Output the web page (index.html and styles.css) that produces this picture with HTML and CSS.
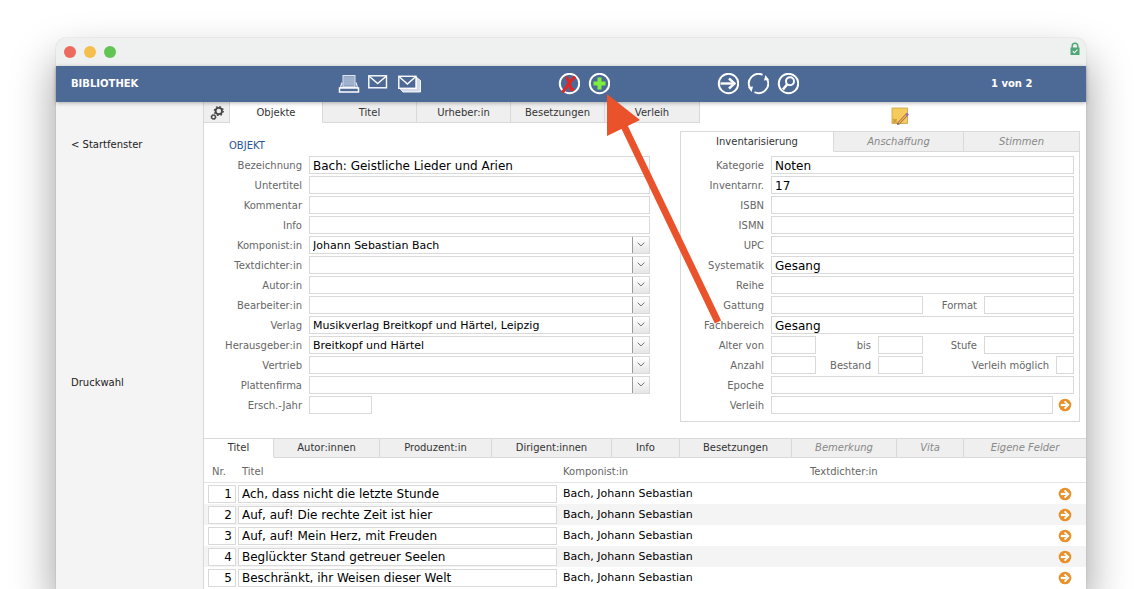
FILE: index.html
```html
<!DOCTYPE html>
<html lang="de">
<head>
<meta charset="utf-8">
<title>Bibliothek</title>
<link rel="stylesheet" href="styles.css">
</head>
<body>
<svg class="defs" aria-hidden="true">
  <symbol id="go" viewBox="0 0 14 14">
    <circle cx="7" cy="7" r="6.300" fill="#e8912a"/>
    <path d="M2.800 7h6.500" fill="none" stroke="#fff" stroke-width="2.200"/>
    <path d="M6.600 3.300L10.300 7l-3.700 3.700" fill="none" stroke="#fff" stroke-width="1.900"/>
  </symbol>
  <symbol id="chevron" viewBox="0 0 17 16">
    <path d="M5 5.500L8.500 9 12 5.500" fill="none" stroke="#666" stroke-width="1"/>
  </symbol>
</svg>
<div class="window">
  <header class="titlebar">
    <span class="dot red"></span><span class="dot yellow"></span><span class="dot green"></span>
    <svg class="lock" viewBox="0 0 10 14" width="10" height="14" role="img" aria-label="Gesichert">
      <path d="M2.200 6V4a2.800 2.800 0 0 1 5.600 0v2" fill="none" stroke="#4fa775" stroke-width="1.500"/>
      <rect x=".5" y="5.500" width="9" height="7.500" fill="#4fa775"/>
      <path d="M2.800 9.200l1.600 1.600 3-3.200" fill="none" stroke="#fff" stroke-width="1.100"/>
    </svg>
  </header>

  <div class="toolbar">
    <h1 class="app-title">BIBLIOTHEK</h1>
    <div class="tools">
      <button class="tool" aria-label="Drucken">
        <svg viewBox="0 0 22 22" width="22" height="22" fill="none" stroke="#fff">
          <rect x="5" y="2.500" width="12" height="11.500" fill="#8fa3c4" stroke="#dfe6f1"/>
          <path d="M6 5h10M6 7h10M6 9h10M6 11h10" stroke="#b9c6dc" stroke-width=".8"/>
          <path d="M4 9.500L2.500 14.500h17L18 9.500" stroke="#e6ebf4" stroke-width="1.200"/>
          <rect x="1.500" y="15" width="19" height="4" stroke-width="1.500"/>
        </svg>
      </button>
      <button class="tool" aria-label="E-Mail">
        <svg viewBox="0 0 22 22" width="22" height="22" fill="none" stroke="#fff" stroke-width="1.400">
          <rect x=".8" y="2.800" width="17.700" height="12"/><path d="M1.500 3.500l8.200 7 8.200-7"/>
        </svg>
      </button>
      <button class="tool" aria-label="Serien-E-Mail">
        <svg viewBox="0 0 24 22" width="24" height="22" stroke="#fff" stroke-width="1.400">
          <path d="M1.500 15l3.500 4h17.500V7.500L18 4v11z" fill="#d4dcea" stroke-width=".9"/>
          <rect x=".8" y="3.300" width="17.200" height="12" fill="#4d6a96"/><path d="M1.500 4l7.900 7 7.900-7" fill="none"/>
        </svg>
      </button>
    </div>
    <div class="tools">
      <button class="tool" aria-label="Löschen">
        <svg viewBox="0 0 22 22" width="22" height="22" fill="none">
          <circle cx="11.500" cy="10.500" r="9.700" stroke="#fff" stroke-width="2"/>
          <path d="M7.500 4.500c1.500 0 2 1 2.500 2.500l3.500 9.500h2.500M17 3.500C12 8.500 8 14.500 4.500 19.500" stroke="#e5251f" stroke-width="3"/>
        </svg>
      </button>
      <button class="tool" aria-label="Neu">
        <svg viewBox="0 0 22 22" width="22" height="22" fill="none">
          <circle cx="11.500" cy="10.500" r="9.700" stroke="#fff" stroke-width="2"/>
          <path d="M11.500 4.500v12M5.500 10.500h12" stroke="#7bf03c" stroke-width="4"/>
        </svg>
      </button>
    </div>
    <div class="tools">
      <button class="tool" aria-label="Weiter">
        <svg viewBox="0 0 22 22" width="22" height="22" fill="none" stroke="#fff" stroke-width="2">
          <circle cx="11.500" cy="10.500" r="9.700"/><path d="M3.500 10.500h14" stroke-width="2.400"/><path d="M12 5.500l5.500 5-5.500 5" stroke-width="2.400"/>
        </svg>
      </button>
      <button class="tool" aria-label="Aktualisieren">
        <svg viewBox="0 0 22 22" width="22" height="22" fill="none" stroke="#fff" stroke-width="1.900">
          <path d="M15.500 1.800A9.600 9.600 0 0 0 3 15M7.500 19.200A9.600 9.600 0 0 0 20 6"/>
          <path d="M1 14.200l5-.6-1.400 5.400zM22 6.800l-5 .6 1.400-5.400z" fill="#fff" stroke="none"/>
        </svg>
      </button>
      <button class="tool" aria-label="Suchen">
        <svg viewBox="0 0 22 22" width="22" height="22" fill="none" stroke="#fff" stroke-width="2">
          <circle cx="11.500" cy="10.500" r="9.700"/><circle cx="13" cy="8.300" r="4"/><path d="M10.200 11.300L6 16.500" stroke-width="2.600"/>
        </svg>
      </button>
    </div>
    <span class="counter">1 von 2</span>
  </div>

  <div class="body">
    <nav class="sidebar">
      <a href="#start">&lt; Startfenster</a>
      <a href="#druck">Druckwahl</a>
    </nav>

    <main class="main">
      <div class="top-tabs">
        <button class="tab gear" aria-label="Einstellungen">
          <svg viewBox="0 0 16 16" width="16" height="16" fill="none" stroke="#444">
            <circle cx="9.800" cy="6" r="3.200" stroke-width="1.800"/>
            <circle cx="9.800" cy="6" r="4.500" stroke-width="1.200" stroke-dasharray="1.700 1.830"/>
            <circle cx="4.500" cy="12" r="1.900" stroke-width="1.300"/>
            <circle cx="4.500" cy="12" r="2.700" stroke-width=".7" stroke-dasharray="1.100 1"/>
          </svg>
        </button>
        <button class="tab active">Objekte</button>
        <button class="tab">Titel</button>
        <button class="tab">Urheber:in</button>
        <button class="tab">Besetzungen</button>
        <button class="tab">Verleih</button>
        <button class="note" aria-label="Notiz">
          <svg viewBox="0 0 18 18" width="18" height="18">
            <rect x="1" y="1" width="15.500" height="15.500" fill="#f5cb5c" stroke="#c9a04a" stroke-width=".8"/>
            <path d="M1.500 11.500l4.500.5v4H1.500z" fill="#e3ad45"/><path d="M2 12l3.500 3.500M2 15.500L5.500 12" stroke="#b98a3a" stroke-width=".6"/>
            <path d="M7 17l9-9.500" stroke="#9a6b3c" stroke-width="2.600"/><path d="M7.500 16.500l8-8.500" stroke="#f0b26a" stroke-width="1.200"/>
            <path d="M15.200 8.300L17 6.500" stroke="#a06aa8" stroke-width="2.600"/><path d="M6 18l.8-2 1.200 1z" fill="#444"/>
          </svg>
        </button>
      </div>

      <div class="forms">
        <section class="object">
          <h2 class="section-title">OBJEKT</h2>
          <div class="row"><label for="bez">Bezeichnung</label><input id="bez" class="field large" value="Bach: Geistliche Lieder und Arien"></div>
          <div class="row"><label for="unt">Untertitel</label><input id="unt" class="field"></div>
          <div class="row"><label for="kom">Kommentar</label><input id="kom" class="field"></div>
          <div class="row"><label for="inf">Info</label><input id="inf" class="field"></div>
          <div class="row"><label for="kpn">Komponist:in</label><span class="combo"><select id="kpn" class="field"><option>Johann Sebastian Bach</option></select><svg class="arrow"><use href="#chevron"/></svg></span></div>
          <div class="row"><label for="txt">Textdichter:in</label><span class="combo"><select id="txt" class="field"><option></option></select><svg class="arrow"><use href="#chevron"/></svg></span></div>
          <div class="row"><label for="aut">Autor:in</label><span class="combo"><select id="aut" class="field"><option></option></select><svg class="arrow"><use href="#chevron"/></svg></span></div>
          <div class="row"><label for="bea">Bearbeiter:in</label><span class="combo"><select id="bea" class="field"><option></option></select><svg class="arrow"><use href="#chevron"/></svg></span></div>
          <div class="row"><label for="vlg">Verlag</label><span class="combo"><select id="vlg" class="field"><option>Musikverlag Breitkopf und Härtel, Leipzig</option></select><svg class="arrow"><use href="#chevron"/></svg></span></div>
          <div class="row"><label for="hrs">Herausgeber:in</label><span class="combo"><select id="hrs" class="field"><option>Breitkopf und Härtel</option></select><svg class="arrow"><use href="#chevron"/></svg></span></div>
          <div class="row"><label for="vtr">Vertrieb</label><span class="combo"><select id="vtr" class="field"><option></option></select><svg class="arrow"><use href="#chevron"/></svg></span></div>
          <div class="row"><label for="pla">Plattenfirma</label><span class="combo"><select id="pla" class="field"><option></option></select><svg class="arrow"><use href="#chevron"/></svg></span></div>
          <div class="row"><label for="jahr">Ersch.-Jahr</label><input id="jahr" class="field year"></div>
        </section>

        <section class="panel">
          <div class="panel-tabs">
            <button class="tab active">Inventarisierung</button>
            <button class="tab muted">Anschaffung</button>
            <button class="tab muted">Stimmen</button>
          </div>
          <div class="inventory">
            <label for="kat">Kategorie</label><input id="kat" class="field large wide" value="Noten">
            <label for="inv">Inventarnr.</label><input id="inv" class="field large wide" value="17">
            <label for="isbn">ISBN</label><input id="isbn" class="field wide">
            <label for="ismn">ISMN</label><input id="ismn" class="field wide">
            <label for="upc">UPC</label><input id="upc" class="field wide">
            <label for="sys">Systematik</label><input id="sys" class="field large wide" value="Gesang">
            <label for="rei">Reihe</label><input id="rei" class="field wide">
            <label for="gat">Gattung</label><input id="gat" class="field span3"><label for="for">Format</label><input id="for" class="field">
            <label for="fach">Fachbereich</label><input id="fach" class="field large wide" value="Gesang">
            <label for="von">Alter von</label><input id="von" class="field"><label for="bis">bis</label><input id="bis" class="field"><label for="stu">Stufe</label><input id="stu" class="field">
            <label for="anz">Anzahl</label><input id="anz" class="field"><label for="bst">Bestand</label><input id="bst" class="field">
            <div class="lend-flag"><label for="vm">Verleih möglich</label><input id="vm" class="field" type="checkbox"></div>
            <label for="epo">Epoche</label><input id="epo" class="field wide">
            <label for="vrl">Verleih</label>
            <div class="wide lend"><input id="vrl" class="field"><button class="go" aria-label="Verleih öffnen"><svg><use href="#go"/></svg></button></div>
          </div>
        </section>
      </div>

      <div class="list-tabs">
        <button class="tab active">Titel</button>
        <button class="tab">Autor:innen</button>
        <button class="tab">Produzent:in</button>
        <button class="tab">Dirigent:innen</button>
        <button class="tab">Info</button>
        <button class="tab">Besetzungen</button>
        <button class="tab muted">Bemerkung</button>
        <button class="tab muted">Vita</button>
        <button class="tab muted">Eigene Felder</button>
      </div>
      <table class="titles">
        <colgroup><col class="c-nr"><col class="c-title"><col class="c-comp"><col class="c-text"><col class="c-go"></colgroup>
        <thead><tr><th class="nr">Nr.</th><th>Titel</th><th>Komponist:in</th><th>Textdichter:in</th><th></th></tr></thead>
        <tbody>
          <tr><td class="nr"><input class="field large" aria-label="Nr." value="1"></td><td class="title"><input class="field large" aria-label="Titel" value="Ach, dass nicht die letzte Stunde"></td><td>Bach, Johann Sebastian</td><td></td><td><button class="go" aria-label="Öffnen"><svg><use href="#go"/></svg></button></td></tr>
          <tr><td class="nr"><input class="field large" aria-label="Nr." value="2"></td><td class="title"><input class="field large" aria-label="Titel" value="Auf, auf! Die rechte Zeit ist hier"></td><td>Bach, Johann Sebastian</td><td></td><td><button class="go" aria-label="Öffnen"><svg><use href="#go"/></svg></button></td></tr>
          <tr><td class="nr"><input class="field large" aria-label="Nr." value="3"></td><td class="title"><input class="field large" aria-label="Titel" value="Auf, auf! Mein Herz, mit Freuden"></td><td>Bach, Johann Sebastian</td><td></td><td><button class="go" aria-label="Öffnen"><svg><use href="#go"/></svg></button></td></tr>
          <tr><td class="nr"><input class="field large" aria-label="Nr." value="4"></td><td class="title"><input class="field large" aria-label="Titel" value="Beglückter Stand getreuer Seelen"></td><td>Bach, Johann Sebastian</td><td></td><td><button class="go" aria-label="Öffnen"><svg><use href="#go"/></svg></button></td></tr>
          <tr><td class="nr"><input class="field large" aria-label="Nr." value="5"></td><td class="title"><input class="field large" aria-label="Titel" value="Beschränkt, ihr Weisen dieser Welt"></td><td>Bach, Johann Sebastian</td><td></td><td><button class="go" aria-label="Öffnen"><svg><use href="#go"/></svg></button></td></tr>
        </tbody>
      </table>
    </main>
  </div>

  <svg class="pointer" viewBox="0 0 116 232" width="116" height="232" aria-hidden="true">
    <path d="M17 32L111 228" stroke="#e9522b" stroke-width="7"/>
    <path d="M0 0L33 26 0 42z" fill="#e9522b"/>
  </svg>
</div>
</body>
</html>
```

FILE: styles.css
```css
* { box-sizing: border-box; }

body {
  margin: 0;
  height: 100vh;
  overflow: hidden;
  padding: 38px 56px 0;
  background: #fff;
  color: #444;
  font: 10px/14px "DejaVu Sans", Verdana, sans-serif;
}

button, input, select { margin: 0; font: inherit; color: inherit; border-radius: 0; }
button { padding: 0; border: 0; background: none; }
h1, h2 { margin: 0; font-size: inherit; }
a { color: inherit; text-decoration: none; }

.defs { position: absolute; width: 0; height: 0; }

.window {
  position: relative;
  display: flex;
  flex-direction: column;
  min-height: 100%;
  border-radius: 10px 10px 0 0;
  background: #fff;
  box-shadow: 0 0 1px rgba(0, 0, 0, .4), 0 22px 44px rgba(0, 0, 0, .4);
}

.titlebar {
  display: flex;
  align-items: center;
  gap: 8px;
  height: 28px;
  padding: 0 6px 0 8px;
  border-radius: 10px 10px 0 0;
  background: #eff1f1;
}
.dot { width: 12px; height: 12px; border-radius: 50%; }
.red { background: #ec6a5e; }
.yellow { background: #f4bf4f; }
.green { background: #61c554; }
.lock { margin: 0 0 6px auto; }

.toolbar {
  position: relative;
  display: grid;
  grid-template-columns: 282fr 220fr 159fr 274fr 95fr;
  align-items: center;
  height: 36px;
  background: #4d6a96;
  color: #fff;
  box-shadow: 0 1px 4px rgba(0, 0, 0, .3);
}
.app-title { padding-left: 15px; font-weight: bold; }
.tools { display: flex; gap: 8px; }
.tool { height: 22px; }
.tool svg { display: block; }
.counter { font-weight: bold; }

.body { flex: 1; display: grid; grid-template-columns: 148px 1fr; }

.sidebar {
  display: flex;
  flex-direction: column;
  gap: 224px;
  padding: 36px 15px;
  background: #f4f4f4;
  border-right: 1px solid #d9d9d9;
  color: #222;
}

.tab {
  height: 21px;
  background: #efefef;
  border: solid #d9d9d9;
  border-width: 0 1px 1px 0;
  color: #333;
}
.tab.active { background: #fff; border-bottom-color: #fff; }
.tab.muted { color: #888; font-style: italic; }

.top-tabs { display: grid; grid-template-columns: 26px 93fr 94fr 94fr 94fr 95fr 386fr; }
.top-tabs .tab { padding-top: 1px; }
.gear svg { display: block; margin: 0 auto; }
.note { justify-self: center; padding: 5px 0 0 14px; height: 21px; }
.note svg { display: block; }

.forms { display: grid; grid-template-columns: 476fr 400fr; padding: 8px 6px 16px 0; }

.object { padding: 8px 30px 0 0; }
.section-title { padding: 0 0 3px 25px; color: #2a5590; font-weight: normal; }
.row { display: grid; grid-template-columns: 98px 1fr; column-gap: 7px; margin-bottom: 2px; }
label { height: 18px; padding-top: 1px; color: #666; line-height: 18px; text-align: right; white-space: nowrap; }

.field {
  width: 100%;
  height: 18px;
  min-width: 0;
  padding: 1px 3px 0;
  border: 1px solid #d9d9d9;
  background: #fff;
  color: #000;
  font-size: 11px;
  line-height: 16px;
  appearance: none;
}
.field.large { font-size: 12px; }
.year { width: 63px; }
.combo { display: grid; grid-template-columns: 1fr 18px; }
.combo .field { grid-area: 1 / 1 / 2 / 3; }
.arrow {
  grid-area: 1 / 2;
  width: 17px;
  height: 16px;
  margin-top: 1px;
  border-left: 1px solid #999;
  background: linear-gradient(#fff, #e6e6e6);
  pointer-events: none;
}

.panel { border: 1px solid #d9d9d9; padding-bottom: 7px; }
.panel-tabs { display: grid; grid-template-columns: 153fr 130fr 115fr; }
.panel-tabs .tab { height: 20px; }
.panel-tabs .tab:last-child, .list-tabs .tab:last-child { border-right: 0; }
.inventory {
  display: grid;
  grid-template-columns: 83px 45fr 48fr 45fr 47fr 90fr;
  gap: 2px 7px;
  padding: 4px 5px 0 0;
}
.wide { grid-column: 2 / -1; }
.span3 { grid-column: span 3; }
.lend-flag { grid-column: span 2; display: flex; justify-content: flex-end; gap: 7px; }
.lend-flag .field { width: 18px; }
.lend { display: flex; gap: 5px; }
.go { display: block; width: 14px; height: 18px; flex: none; }
.go svg { display: block; width: 14px; height: 14px; margin: auto; }
.lend .go { margin-right: 2px; }

.list-tabs {
  display: grid;
  grid-template-columns: 70fr 106fr 112fr 120fr 68fr 112fr 105fr 67fr 122fr;
  border-top: 1px solid #d9d9d9;
}
.list-tabs .tab { height: 19px; }

.titles { width: 100%; table-layout: fixed; border-collapse: separate; border-spacing: 0; }
.c-nr { width: 34px; }
.c-title { width: 321px; }
.c-comp { width: 28%; }
.c-go { width: 32px; }
.titles th {
  height: 25px;
  padding: 4px 4px 0;
  border-bottom: 1px solid #e4e4e4;
  color: #666;
  font-weight: normal;
  text-align: left;
}
.titles th.nr { padding-left: 8px; }
.titles td { height: 21px; padding: 0 4px; color: #000; font-size: 11px; }
.titles tbody tr:nth-child(even) { background: #f4f4f4; }
.titles td.nr { padding: 0 2px 0 4px; }
.titles td.title { padding: 0 2px 0 0; }
.titles td .field { display: block; }
.titles td.nr .field { text-align: right; }

.pointer { position: absolute; left: calc(50% + 36px); top: 56px; pointer-events: none; }
```
